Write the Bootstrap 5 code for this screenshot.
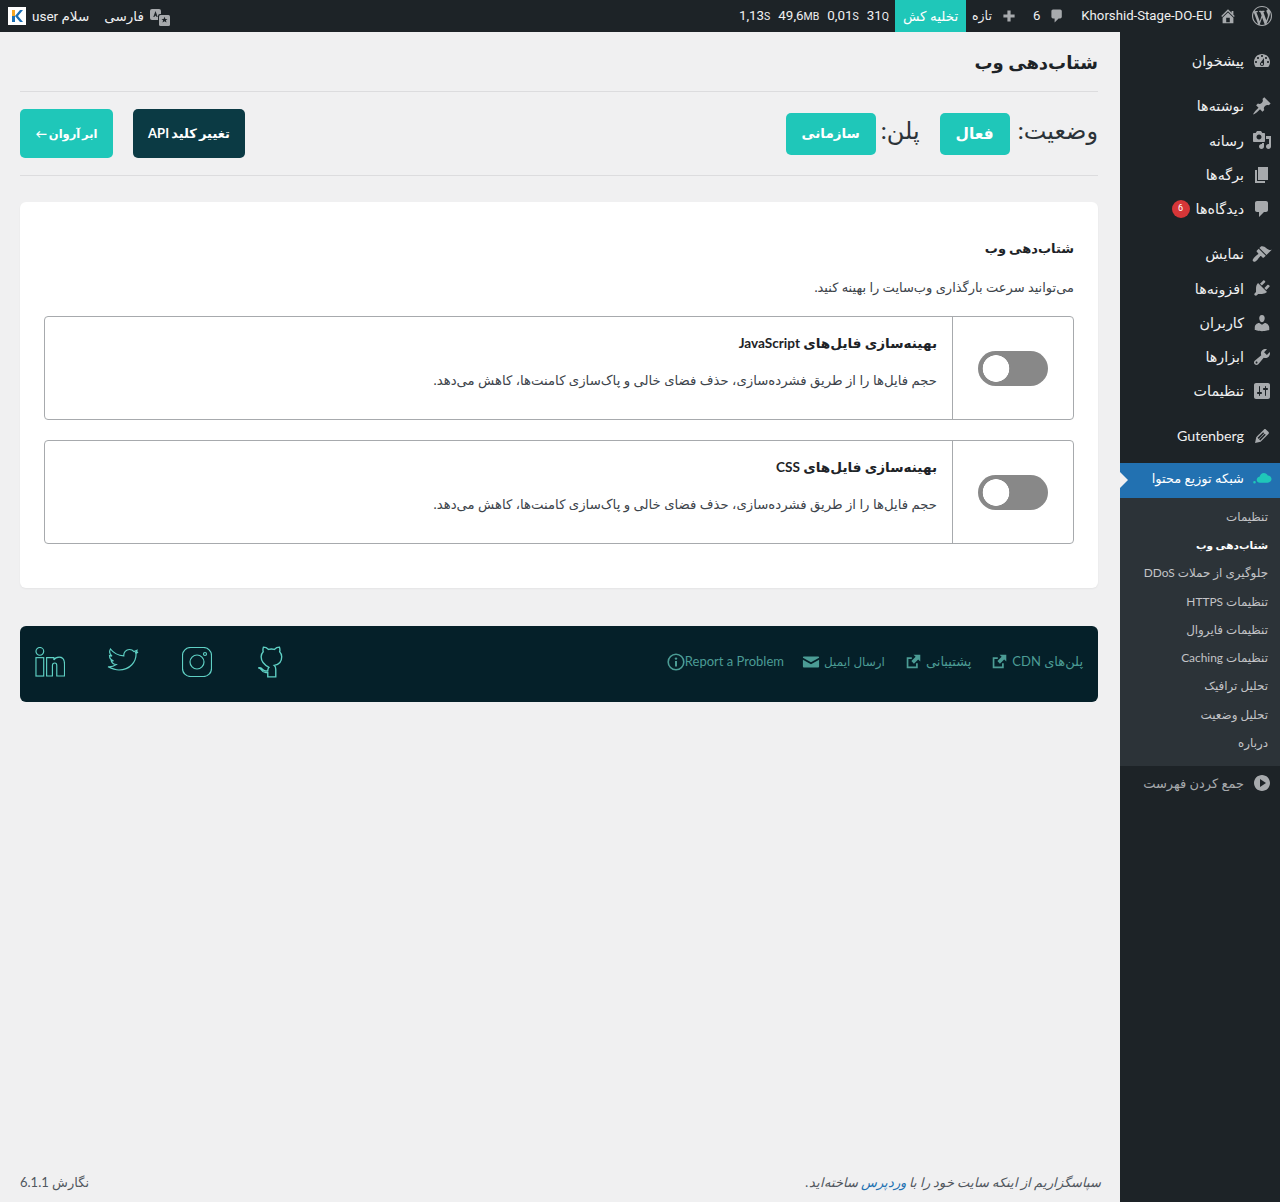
<!DOCTYPE html>
<html lang="fa" dir="rtl">
<head>
  <meta charset="UTF-8">
  <title>شتاب‌دهی وب</title>
  <meta name="viewport" content="width=device-width, initial-scale=1">
  <link href="https://cdn.jsdelivr.net/npm/bootstrap@5.3.0/dist/css/bootstrap.min.css" rel="stylesheet">
  <style>
    body {
      font-family: Lato, "DejaVu Sans", sans-serif;
      background: #f0f0f1;
      color: #1d2327;
      font-size: 13px;
      height: 1202px;
      overflow: hidden;
    }
    svg { fill: currentColor; flex: none; display: block; }
    .top-bar { height: 32px; background: #1d2327; color: #f0f0f1; font-family: Roboto, "DejaVu Sans", sans-serif; font-size: 13.2px; }
    .top-bar svg { color: #a7aaad; }
    .top-fa { font-size: 13.5px; }
    .top-new { font-size: 12.5px; }
    .top-stat { font-size: 13.4px; column-gap: 8px; margin-right: 6px; }
    .top-stat small { font-size: 10.5px; }
    .purge-btn { background: #1fc7b9; color: #fff; height: 32px; width: 71px; font-size: 13.5px; margin-right: 6px; }
    .top-translate { margin-top: 4px; }
    .shell { height: 1170px; }
    .side-menu { width: 160px; background: #1d2327; color: #f0f0f1; padding-top: 12px; font-size: 14.3px; flex: none; }
    .menu-item { height: 34.3px; padding-right: 8px; padding-left: 8px; gap: 8px; position: relative; color: #f0f0f1; text-decoration: none; }
    .menu-item svg { color: #a7aaad; width: 20px; height: 20px; }
    .menu-gap { height: 10.7px; }
    .menu-count { background: #d63638; color: #fff; font-size: 9px; width: 18px; height: 18px; margin-right: -2px; font-family: Roboto, sans-serif; }
    .menu-active { background: #2271b1; color: #fff; margin-top: 10px; font-size: 13px; padding-bottom: 3px; }
    .menu-active svg { color: #1fc7b9; }
    .menu-active::after {
      content: "";
      position: absolute;
      left: 0;
      top: 9px;
      border: 8px solid transparent;
      border-left-color: #f0f0f1;
    }
    .sub-menu { background: #2c3338; padding: 5px 0 9px; font-size: 11.9px; }
    .sub-menu a { display: block; height: 28.3px; line-height: 28px; padding-right: 12px; color: #c3c4c7; text-decoration: none; }
    .sub-menu a.sub-current { color: #fff; font-weight: 700; font-size: 10.5px; }
    .menu-collapse { color: #a7aaad; font-size: 13px; }
    .page-main { padding: 0 22px 0 20px; min-width: 0; }
    .page-title { height: 60px; border-bottom: 1px solid #dcdcde; font-size: 18px; font-weight: 700; line-height: 60px; margin: 0; }
    .status-row { height: 84px; border-bottom: 1px solid #dcdcde; }
    .status-label { font-size: 24px; color: #2c3338; line-height: 1; position: relative; top: -4px; }
    .status-pill { background: #1fc7b9; color: #fff; font-weight: 700; font-size: 15.5px; height: 42px; width: 70px; border-radius: 5px; }
    .status-pill.pill-wide { width: 90px; font-size: 13.5px; margin-right: 5px; }
    .action-btn { height: 49px; font-size: 13px; font-weight: 700; color: #fff; border: 0; border-radius: 5px; padding: 0; white-space: nowrap; word-spacing: -1px; }
    .action-btn:hover { color: #fff; }
    .btn-deep { background: #0b3a44; width: 112px; }
    .btn-mint { background: #1fc7b9; width: 93px; font-size: 11.5px; }
    .btn-mint:hover { background: #1fc7b9; }
    .action-set { column-gap: 20px; }
    .speed-card { margin-top: 26px; height: 386px; border: 0; border-radius: 6px; padding: 36px 24px 0; box-shadow: 0 1px 2px rgba(0,0,0,.05); }
    .speed-card h2 { font-size: 13px; font-weight: 700; margin: 0 0 19px; line-height: 20px; }
    .speed-intro { font-size: 13px; color: #3c434a; margin: 0 0 19px; line-height: 20px; }
    .opt-row { border: 1px solid #a7aaad; border-radius: 4px; height: 104px; margin-bottom: 20px; }
    .opt-switch { width: 121px; border-left: 1px solid #a7aaad; flex: none; }
    .opt-switch .form-check-input {
      width: 70px;
      height: 35px;
      margin: 0;
      border: 0;
      border-radius: 18px;
      background-color: #888;
      background-image: radial-gradient(circle at 18px 50%, #fff 13px, transparent 13.6px);
      background-position: 0 0;
    }
    .opt-text { padding: 15px 15px 0; }
    .opt-text h3 { font-size: 13.6px; font-weight: 700; margin: 0 0 16px; line-height: 22px; }
    .opt-text p { font-size: 13.25px; color: #3c434a; margin: 0; line-height: 20px; }
    .link-strip { margin-top: 38px; height: 76px; background: #052029; border-radius: 6px; padding: 0 15px 5px; color: #4b9c95; }
    .link-strip a { color: #4b9c95; text-decoration: none; font-size: 13px; }
    .link-strip a.link-mail { font-size: 12px; margin-right: 20px; }
    .link-strip a.link-support { margin-right: 20px; }
    .link-strip a.link-report { margin-right: 18px; }
    .social-set { gap: 42px; }
    .social-set svg { fill: none; stroke: #5fd0c4; stroke-width: 1.2; }
    .social-set .soc-git { margin-left: 4px; }
    .social-set .soc-ins { margin-left: 1px; }
    .page-foot { height: 40px; color: #50575e; font-size: 13px; margin-right: -3px; padding-top: 1px; }
    .page-foot em a { color: #2271b1; text-decoration: none; }
  </style>
</head>
<body>

<svg width="0" height="0" class="position-absolute">
  <symbol id="i-wp" viewBox="0 0 20 20"><path d="M20 10c0-5.51-4.49-10-10-10C4.48 0 0 4.49 0 10c0 5.52 4.48 10 10 10 5.51 0 10-4.48 10-10zM7.78 15.37L4.37 6.22c.55-.02 1.17-.08 1.17-.08.5-.06.44-1.13-.06-1.11 0 0-1.45.11-2.37.11-.18 0-.37 0-.58-.01C4.12 2.69 6.87 1.11 10 1.11c2.33 0 4.45.87 6.05 2.34-.68-.11-1.65.39-1.65 1.58 0 .74.45 1.36.9 2.1.35.61.55 1.36.55 2.46 0 1.49-1.4 5-1.4 5l-3.03-8.37c.54-.02.82-.17.82-.17.5-.05.44-1.25-.06-1.22 0 0-1.44.12-2.38.12-.87 0-2.33-.12-2.33-.12-.5-.03-.56 1.2-.06 1.22l.92.08 1.26 3.41zM17.41 10c.24-.64.74-1.87.43-4.25.7 1.29 1.05 2.71 1.05 4.25 0 3.29-1.73 6.24-4.4 7.78.97-2.59 1.94-5.2 2.92-7.78zM6.1 18.09C3.12 16.65 1.11 13.53 1.11 10c0-1.3.23-2.48.72-3.59C3.25 10.3 4.67 14.2 6.1 18.09zm4.03-6.63l2.58 6.98c-.86.29-1.76.45-2.71.45-.79 0-1.57-.11-2.29-.33.81-2.38 1.62-4.74 2.42-7.1z"/></symbol>
  <symbol id="i-home" viewBox="0 0 20 20"><path d="M16 8.5l1.53 1.53-1.06 1.06L10 4.62l-6.47 6.47-1.06-1.06L10 2.5l4 4v-2h2v4zm-6-2.46l6 5.99V18H4v-5.97zM12 17v-5H8v5h4z"/></symbol>
  <symbol id="i-comment" viewBox="0 0 20 20"><path d="M5 2h9c1.1 0 2 .9 2 2v7c0 1.1-.9 2-2 2h-2l-5 5v-5H5c-1.1 0-2-.9-2-2V4c0-1.1.9-2 2-2z"/></symbol>
  <symbol id="i-plus" viewBox="0 0 20 20"><path d="M17 8v4h-5v5H8v-5H3V8h5V3h4v5h5z"/></symbol>
  <symbol id="i-dash" viewBox="0 0 20 20"><path fill-rule="evenodd" d="M3.76 16h12.48c1.1-1.37 1.76-3.11 1.76-5 0-4.42-3.58-8-8-8s-8 3.58-8 8c0 1.89.66 3.63 1.76 5zM10 4c.55 0 1 .45 1 1s-.45 1-1 1-1-.45-1-1 .45-1 1-1zM6 6c.55 0 1 .45 1 1s-.45 1-1 1-1-.45-1-1 .45-1 1-1zm8 0c.55 0 1 .45 1 1s-.45 1-1 1-1-.45-1-1 .45-1 1-1zm-5.37 5.55L12 7v6c0 1.1-.9 2-2 2s-2-.9-2-2c0-.57.24-1.08.63-1.45zM4 10c.55 0 1 .45 1 1s-.45 1-1 1-1-.45-1-1 .45-1 1-1zm12 0c.55 0 1 .45 1 1s-.45 1-1 1-1-.45-1-1 .45-1 1-1zm-5 3c0-.55-.45-1-1-1s-1 .45-1 1 .45 1 1 1 1-.45 1-1z"/></symbol>
  <symbol id="i-pin" viewBox="0 0 20 20"><path d="M10.44 3.02l1.82-1.82 6.36 6.35-1.83 1.82c-1.05-.68-2.48-.57-3.41.36l-.75.75c-.92.93-1.04 2.35-.35 3.41l-1.83 1.82-2.41-2.41-2.8 2.79c-.42.42-3.38 2.71-3.8 2.29s1.86-3.39 2.28-3.81l2.79-2.79L4.1 9.36l1.83-1.82c1.05.69 2.48.57 3.4-.36l.75-.75c.93-.92 1.05-2.35.36-3.41z"/></symbol>
  <symbol id="i-media" viewBox="0 0 20 20"><path fill-rule="evenodd" d="M13 11V4c0-.55-.45-1-1-1h-1.67L9 1H5L3.67 3H2c-.55 0-1 .45-1 1v7c0 .55.45 1 1 1h10c.55 0 1-.45 1-1zM7 4.5c1.38 0 2.5 1.12 2.5 2.5S8.38 9.5 7 9.5 4.5 8.38 4.5 7 5.62 4.5 7 4.5zM14 6h5v10.5c0 1.38-1.12 2.5-2.5 2.5S14 17.88 14 16.5s1.12-2.5 2.5-2.5c.17 0 .34.02.5.05V9h-3V6zm-4 8.05V13h2v3.5c0 1.38-1.12 2.5-2.5 2.5S7 17.88 7 16.5 8.12 14 9.5 14c.17 0 .34.02.5.05z"/></symbol>
  <symbol id="i-page" viewBox="0 0 20 20"><path d="M6 15V2h10v13H6zm-1 1h8v2H3V5h2v11z"/></symbol>
  <symbol id="i-brush" viewBox="0 0 20 20"><path d="M14.48 11.06L7.41 3.99l1.5-1.5c.5-.56 2.3-.47 3.51.32 1.21.8 1.43 1.28 2.91 2.1 1.18.64 2.45 1.26 4.45.85zm-.71.71L6.7 4.7 4.93 6.47c-.39.39-.39 1.02 0 1.41l1.06 1.06c.39.39.39 1.03 0 1.42-.6.6-1.43 1.11-2.21 1.69-.35.26-.7.53-1.01.84-1.43 1.43-2.87 3.27-1.7 4.44 1.17 1.17 3.01-.27 4.44-1.7.31-.31.58-.66.84-1.01.58-.78 1.09-1.61 1.69-2.21.39-.39 1.03-.39 1.42 0l1.06 1.06c.39.39 1.02.39 1.41 0z"/></symbol>
  <symbol id="i-plug" viewBox="0 0 20 20"><path d="M13.11 4.36L9.87 7.6 8 5.73l3.24-3.24c.35-.34 1.05-.2 1.56.32.52.51.66 1.21.31 1.55zm-8 1.77l.91-1.12 9.01 9.01-1.19.84c-.71.71-2.63 1.16-3.82 1.16H6.14L4.9 17.26c-.59.59-1.54.59-2.12 0-.59-.58-.59-1.53 0-2.12l1.24-1.24v-3.88c0-1.13.4-3.19 1.09-3.89zm7.26 3.97l3.24-3.24c.34-.35 1.04-.21 1.55.31.52.51.66 1.21.31 1.55l-3.24 3.25z"/></symbol>
  <symbol id="i-user" viewBox="0 0 20 20"><path d="M10 9.25c-2.27 0-2.73-3.44-2.73-3.44C7 4.02 7.82 2 9.97 2c2.16 0 2.98 2.02 2.71 3.81 0 0-.41 3.44-2.68 3.44zm0 2.57L12.72 10c2.39 0 4.52 2.33 4.52 4.53v2.49s-3.65 1.13-7.24 1.13c-3.65 0-7.24-1.13-7.24-1.13v-2.49c0-2.25 1.94-4.48 4.47-4.48z"/></symbol>
  <symbol id="i-tool" viewBox="0 0 20 20"><path fill-rule="evenodd" d="M16.68 9.77c-1.34 1.34-3.3 1.67-4.95.99l-5.41 6.52c-.99.99-2.59.99-3.58 0s-.99-2.59 0-3.57l6.52-5.42c-.68-1.65-.35-3.61.99-4.95 1.28-1.28 3.12-1.62 4.72-1.06l-2.89 2.89 2.82 2.82 2.86-2.87c.53 1.58.18 3.39-1.08 4.65zM3.81 16.21c.4.39 1.04.39 1.43 0 .4-.4.4-1.04 0-1.43-.39-.4-1.03-.4-1.43 0-.39.39-.39 1.03 0 1.43z"/></symbol>
  <symbol id="i-sliders" viewBox="0 0 20 20"><path fill-rule="evenodd" d="M18 16V4c0-1.1-.9-2-2-2H4c-1.1 0-2 .9-2 2v12c0 1.1.9 2 2 2h12c1.1 0 2-.9 2-2zM8 11h1c.55 0 1 .45 1 1s-.45 1-1 1H8v1.5c0 .28-.22.5-.5.5s-.5-.22-.5-.5V13H6c-.55 0-1-.45-1-1s.45-1 1-1h1V5.5c0-.28.22-.5.5-.5s.5.22.5.5V11zm5-2h-1c-.55 0-1-.45-1-1s.45-1 1-1h1V5.5c0-.28.22-.5.5-.5s.5.22.5.5V7h1c.55 0 1 .45 1 1s-.45 1-1 1h-1v5.5c0 .28-.22.5-.5.5s-.5-.22-.5-.5V9z"/></symbol>
  <symbol id="i-pencil" viewBox="0 0 20 20"><path fill-rule="evenodd" d="M13.89 3.39l2.71 2.72c.46.46.42 1.24.03 1.64l-8.01 8.02-5.56 1.16 1.16-5.58s7.6-7.63 7.99-8.03c.39-.39 1.22-.39 1.68.07zm-2.73 2.79l-5.59 5.61 1.11 1.11 5.54-5.65zm-2.97 8.23l5.58-5.6-1.07-1.08-5.59 5.6z"/></symbol>
  <symbol id="i-play" viewBox="0 0 20 20"><path fill-rule="evenodd" d="M10 2c4.42 0 8 3.58 8 8s-3.58 8-8 8-8-3.58-8-8 3.58-8 8-8zM8 14l6-4-6-4v8z"/></symbol>
  <symbol id="i-ext" viewBox="0 0 20 20"><path d="M10 2h8v8l-2.500-2.500-5 5-3-3 5-5zM2 5h6v2H4v9h9v-4h2v6H2z"/></symbol>
  <symbol id="i-mail" viewBox="0 0 20 20"><path d="M2 4h16c.6 0 1 .4 1 1v.4l-9 5-9-5V5c0-.6.4-1 1-1zm-1 3.400l9 5 9-5V15c0 .6-.4 1-1 1H2c-.6 0-1-.4-1-1z"/></symbol>
</svg>

<header class="top-bar d-flex align-items-center">
  <svg width="20" height="20" style="margin-right:8px"><use href="#i-wp"/></svg>
  <svg width="18" height="18" style="margin-right:15px"><use href="#i-home"/></svg>
  <span style="margin-right:7px" dir="ltr">Khorshid-Stage-DO-EU</span>
  <svg width="16" height="16" style="margin-right:16px"><use href="#i-comment"/></svg>
  <span style="margin-right:9px">6</span>
  <svg width="16" height="16" style="margin-right:16px"><use href="#i-plus"/></svg>
  <span class="top-new" style="margin-right:9px">تازه</span>
  <span class="purge-btn d-flex align-items-center justify-content-center">تخلیه کش</span>
  <span class="top-stat d-flex" dir="ltr">
    <span>1,13<small>S</small></span><span>49,6<small>MB</small></span><span>0,01<small>S</small></span><span>31<small>Q</small></span>
  </span>
  <span class="flex-grow-1"></span>
  <svg class="top-translate" width="20" height="18" viewBox="0 0 20 18"><rect x="0" y="0" width="11" height="11" rx="2"/><rect x="8" y="5" width="12" height="12" rx="2" fill="#1d2327"/><rect x="9" y="6" width="11" height="11" rx="1.500"/><path d="M14.500 7.800l.9 2.100h2.100l-1.600 1.400.6 2.200-2-1.200-2 1.200.6-2.200-1.600-1.400h2.100z" fill="#1d2327"/><path d="M5.500 2l2.200 6H6.500l-.4-1.200H4.900L4.500 8H3.300z" fill="#1d2327"/></svg>
  <span class="top-fa" style="margin-right:6px">فارسی</span>
  <span class="top-fa" style="margin-right:15px">سلام user</span>
  <svg width="18" height="18" viewBox="0 0 18 18" style="margin:0 6px 0 8px"><rect width="18" height="18" fill="#fff"/><rect x="4" y="9" width="3" height="6" fill="#1a6fb5"/><path d="M7 9l5-6h3l-5 6 5 6h-3z" fill="#1a6fb5"/><rect x="4" y="3" width="3" height="6" fill="#f5a623"/></svg>
</header>

<div class="shell d-flex">
  <nav class="side-menu">
    <a class="menu-item d-flex align-items-center" href="#"><svg><use href="#i-dash"/></svg><span>پیشخوان</span></a>
    <div class="menu-gap"></div>
    <a class="menu-item d-flex align-items-center" href="#"><svg><use href="#i-pin"/></svg><span>نوشته‌ها</span></a>
    <a class="menu-item d-flex align-items-center" href="#"><svg><use href="#i-media"/></svg><span>رسانه</span></a>
    <a class="menu-item d-flex align-items-center" href="#"><svg><use href="#i-page"/></svg><span>برگه‌ها</span></a>
    <a class="menu-item d-flex align-items-center" href="#"><svg><use href="#i-comment"/></svg><span>دیدگاه‌ها</span><span class="menu-count rounded-circle d-flex align-items-center justify-content-center">6</span></a>
    <div class="menu-gap"></div>
    <a class="menu-item d-flex align-items-center" href="#"><svg><use href="#i-brush"/></svg><span>نمایش</span></a>
    <a class="menu-item d-flex align-items-center" href="#"><svg><use href="#i-plug"/></svg><span>افزونه‌ها</span></a>
    <a class="menu-item d-flex align-items-center" href="#"><svg><use href="#i-user"/></svg><span>کاربران</span></a>
    <a class="menu-item d-flex align-items-center" href="#"><svg><use href="#i-tool"/></svg><span>ابزارها</span></a>
    <a class="menu-item d-flex align-items-center" href="#"><svg><use href="#i-sliders"/></svg><span>تنظیمات</span></a>
    <div class="menu-gap"></div>
    <a class="menu-item d-flex align-items-center" href="#"><svg><use href="#i-pencil"/></svg><span>Gutenberg</span></a>
    <a class="menu-item menu-active d-flex align-items-center" href="#"><svg viewBox="0 0 20 20"><path d="M15.800 6.500c2 0 3.700 1.600 3.700 3.600s-1.700 3.600-3.700 3.600H8c-1.900 0-3.300-1.300-3.300-3 0-1.600 1.200-2.800 2.800-3C8.200 5.400 9.900 4 11.800 4c1.800 0 3.300 1 4 2.500zM2.500 12a1.300 1.300 0 1 1 0 2.600 1.300 1.300 0 0 1 0-2.600z"/></svg><span>شبکه توزیع محتوا</span></a>
    <div class="sub-menu">
      <a href="#">تنظیمات</a>
      <a href="#" class="sub-current">شتاب‌دهی وب</a>
      <a href="#">جلوگیری از حملات DDoS</a>
      <a href="#">تنظیمات HTTPS</a>
      <a href="#">تنظیمات فایروال</a>
      <a href="#">تنظیمات Caching</a>
      <a href="#">تحلیل ترافیک</a>
      <a href="#">تحلیل وضعیت</a>
      <a href="#">درباره</a>
    </div>
    <a class="menu-item menu-collapse d-flex align-items-center" href="#"><svg><use href="#i-play"/></svg><span>جمع کردن فهرست</span></a>
  </nav>

  <main class="page-main flex-grow-1 d-flex flex-column">
    <h1 class="page-title">شتاب‌دهی وب</h1>

    <div class="status-row d-flex align-items-center justify-content-between">
      <div class="d-flex align-items-center">
        <span class="status-label">وضعیت:</span>
        <span class="status-pill d-flex align-items-center justify-content-center" style="margin-right:8px">فعال</span>
        <span class="status-label" style="margin-right:20px">پلن:</span>
        <span class="status-pill pill-wide d-flex align-items-center justify-content-center">سازمانی</span>
      </div>
      <div class="action-set d-flex">
        <a class="btn action-btn btn-deep d-flex align-items-center justify-content-center" href="#">تغییر کلید API</a>
        <a class="btn action-btn btn-mint d-flex align-items-center justify-content-center" href="#">ابر آروان ←</a>
      </div>
    </div>

    <section class="card speed-card">
      <h2>شتاب‌دهی وب</h2>
      <p class="speed-intro">می‌توانید سرعت بارگذاری وب‌سایت را بهینه کنید.</p>

      <div class="opt-row d-flex">
        <div class="opt-switch d-flex align-items-center justify-content-center"><input class="form-check-input" type="checkbox" role="switch" aria-label="JavaScript"></div>
        <div class="opt-text flex-grow-1">
          <h3>بهینه‌سازی فایل‌های JavaScript</h3>
          <p>حجم فایل‌ها را از طریق فشرده‌سازی، حذف فضای خالی و پاک‌سازی کامنت‌ها، کاهش می‌دهد.</p>
        </div>
      </div>

      <div class="opt-row d-flex">
        <div class="opt-switch d-flex align-items-center justify-content-center"><input class="form-check-input" type="checkbox" role="switch" aria-label="CSS"></div>
        <div class="opt-text flex-grow-1">
          <h3>بهینه‌سازی فایل‌های CSS</h3>
          <p>حجم فایل‌ها را از طریق فشرده‌سازی، حذف فضای خالی و پاک‌سازی کامنت‌ها، کاهش می‌دهد.</p>
        </div>
      </div>
    </section>

    <div class="link-strip d-flex align-items-center justify-content-between">
      <div class="d-flex align-items-center">
        <a class="d-flex align-items-center gap-1" href="#">پلن‌های CDN <svg width="17" height="17"><use href="#i-ext"/></svg></a>
        <a class="link-support d-flex align-items-center gap-1" href="#">پشتیبانی <svg width="17" height="17"><use href="#i-ext"/></svg></a>
        <a class="link-mail d-flex align-items-center gap-1" href="#">ارسال ایمیل <svg width="18" height="18"><use href="#i-mail"/></svg></a>
        <a class="link-report d-flex align-items-center" href="#" dir="ltr"><svg width="18" height="18" viewBox="0 0 18 18"><circle cx="9" cy="9" r="7.800" fill="none" stroke="currentColor" stroke-width="1.600"/><rect x="8" y="8" width="2" height="5.500"/><circle cx="9" cy="5.600" r="1.200"/></svg>Report a Problem</a>
      </div>
      <div class="social-set d-flex align-items-center">
        <svg class="soc-git" width="28" height="32" viewBox="4 2 23 28"><path d="M8 3c2 0 4 1.500 4.500 2 1.500-.4 3.500-.4 5 0 .5-.5 2.500-2 4.500-2 .5 1.500.5 3 .2 4 1 1 1.800 2.500 1.800 4.500 0 5-3 7-6.500 7.500 1 .8 1.300 2 1.300 3.500V29h-7v-4c-2.800.7-4.500-.3-5.500-2-.5-1-1.500-1.500-2.500-1.800 1-.5 2.500 0 3.500 1.300.8 1.200 2 1.600 4.500 1 0-1.200.3-2 1-2.800C9 18.700 6 16.500 6 11.500c0-2 .8-3.500 1.800-4.500-.3-1-.3-2.500.2-4z"/></svg>
        <svg class="soc-ins" width="30" height="30" viewBox="0 0 30 30"><rect x=".5" y=".5" width="29" height="29" rx="8"/><circle cx="15" cy="15" r="7"/><circle cx="23" cy="7" r="1.500"/></svg>
        <svg width="32" height="28" viewBox="0 0 32 28"><path d="M31 4l-3 1c1-.5 1.800-1.700 2-2.700l-3 1.300C25.800 2.200 24 1.500 22.500 1.500c-3.500 0-6 2.800-5.700 6.300C11.500 7.500 6.500 5 3.500 1 2 3.500 3 6.500 5 8.200L2.500 7.500c0 2.500 1.500 4.500 4 5.300l-2.300.1c.7 2 2.500 3.500 5 3.600-2.300 1.800-5 2.500-8.200 2.300C4.500 20.500 8 22 12 22c11 0 17.500-8.500 17-16.500z"/></svg>
        <svg width="30" height="30" viewBox="0 0 31 31"><circle cx="5" cy="4.500" r="4"/><rect x="1" y="11" width="8" height="19"/><path d="M12 11h7.500v2.500C20.500 11.500 22.500 10.500 25 10.500c4 0 5.500 2.500 5.500 7V30h-8V19c0-1.500-.5-2.500-2-2.500s-2.500 1-2.500 2.500v11h-6z"/></svg>
      </div>
    </div>

    <footer class="page-foot mt-auto d-flex align-items-center justify-content-between">
      <em>سپاسگزاریم از اینکه سایت خود را با <a href="#">وردپرس</a> ساخته‌اید.</em>
      <span>نگارش 6.1.1</span>
    </footer>
  </main>
</div>

</body>
</html>
